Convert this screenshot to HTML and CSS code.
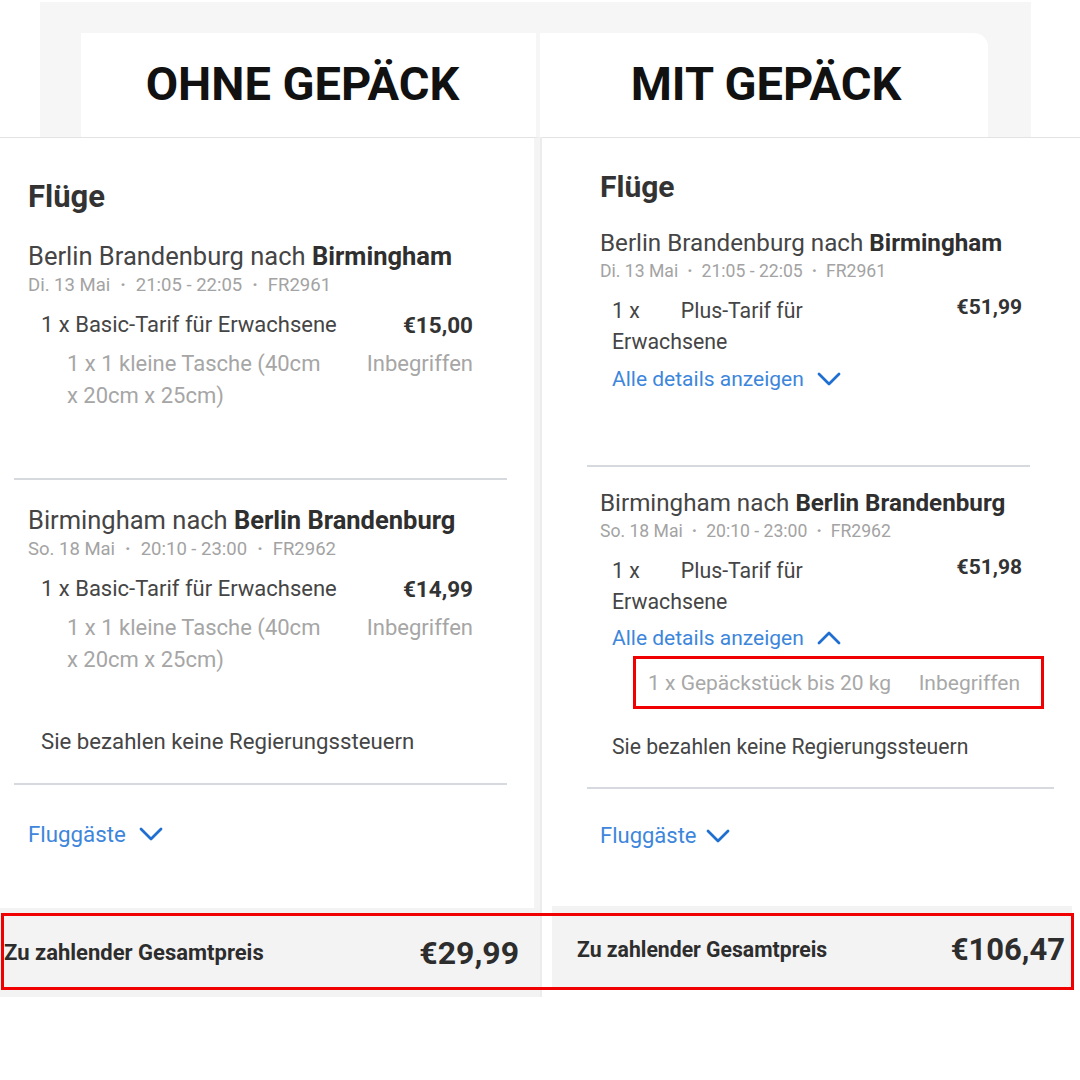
FILE: index.html
```html
<!DOCTYPE html>
<html lang="de">
<head>
<meta charset="utf-8">
<title>Ohne Gepäck / Mit Gepäck</title>
<link rel="stylesheet" href="styles.css">
</head>
<body>
<div class="page">
  <div class="header">
    <div class="hcard hcard-left">OHNE GEPÄCK</div>
    <div class="hcard hcard-right">MIT GEPÄCK</div>
  </div>

  <div class="cols">
    <!-- LEFT: OHNE GEPÄCK -->
    <section class="col col-left">
      <div class="panel">
        <h2 class="title">Flüge</h2>

        <div class="route">Berlin Brandenburg nach <b>Birmingham</b></div>
        <div class="meta">Di. 13 Mai<span class="dot">·</span>21:05 - 22:05<span class="dot">·</span>FR2961</div>
        <div class="fare">
          <span class="fare-label">1 x Basic-Tarif für Erwachsene</span>
          <span class="fare-price">€15,00</span>
        </div>
        <div class="incl">
          <span class="incl-label">1 x 1 kleine Tasche (40cm x 20cm x 25cm)</span>
          <span class="incl-value">Inbegriffen</span>
        </div>

        <div class="divider divider-1"></div>

        <div class="route route-2">Birmingham nach <b>Berlin Brandenburg</b></div>
        <div class="meta">So. 18 Mai<span class="dot">·</span>20:10 - 23:00<span class="dot">·</span>FR2962</div>
        <div class="fare">
          <span class="fare-label">1 x Basic-Tarif für Erwachsene</span>
          <span class="fare-price">€14,99</span>
        </div>
        <div class="incl">
          <span class="incl-label">1 x 1 kleine Tasche (40cm x 20cm x 25cm)</span>
          <span class="incl-value">Inbegriffen</span>
        </div>

        <div class="taxes">Sie bezahlen keine Regierungssteuern</div>

        <div class="divider divider-2"></div>

        <div class="link link-pax">Fluggäste
          <svg class="chev" viewBox="0 0 24 14" width="24" height="14"><polyline points="2,2 12,12 22,2" /></svg>
        </div>
      </div>
      <div class="total">
        <span class="total-label">Zu zahlender Gesamtpreis</span>
        <span class="total-price">€29,99</span>
      </div>
    </section>

    <!-- RIGHT: MIT GEPÄCK -->
    <section class="col col-right">
      <div class="panel">
        <h2 class="title">Flüge</h2>

        <div class="route">Berlin Brandenburg nach <b>Birmingham</b></div>
        <div class="meta">Di. 13 Mai<span class="dot">·</span>21:05 - 22:05<span class="dot">·</span>FR2961</div>
        <div class="fare">
          <div class="fare-label">
            <div class="fline"><span class="qty">1 x</span><span>Plus-Tarif für</span></div>
            <div>Erwachsene</div>
          </div>
          <span class="fare-price">€51,99</span>
        </div>
        <div class="link link-details">Alle details anzeigen
          <svg class="chev" viewBox="0 0 24 14" width="24" height="14"><polyline points="2,2 12,12 22,2" /></svg>
        </div>

        <div class="divider divider-1"></div>

        <div class="route route-2">Birmingham nach <b>Berlin Brandenburg</b></div>
        <div class="meta">So. 18 Mai<span class="dot">·</span>20:10 - 23:00<span class="dot">·</span>FR2962</div>
        <div class="fare">
          <div class="fare-label">
            <div class="fline"><span class="qty">1 x</span><span>Plus-Tarif für</span></div>
            <div>Erwachsene</div>
          </div>
          <span class="fare-price">€51,98</span>
        </div>
        <div class="link link-details link-open">Alle details anzeigen
          <svg class="chev" viewBox="0 0 24 14" width="24" height="14"><polyline points="2,12 12,2 22,12" /></svg>
        </div>
        <div class="bag">
          <span class="bag-label">1 x Gepäckstück bis 20 kg</span>
          <span class="bag-value">Inbegriffen</span>
        </div>

        <div class="taxes">Sie bezahlen keine Regierungssteuern</div>

        <div class="divider divider-2"></div>

        <div class="link link-pax">Fluggäste
          <svg class="chev" viewBox="0 0 24 14" width="24" height="14"><polyline points="2,2 12,12 22,2" /></svg>
        </div>
      </div>
      <div class="total">
        <span class="total-label">Zu zahlender Gesamtpreis</span>
        <span class="total-price">€106,47</span>
      </div>
    </section>
  </div>

  <div class="highlight"></div>
</div>
</body>
</html>
```

FILE: styles.css
```css
* { box-sizing: border-box; }

html, body {
  margin: 0;
  padding: 0;
  background: #ffffff;
}

body {
  font-family: Roboto, "Liberation Sans", Arial, sans-serif;
  color: #3f3f3f;
}

.page {
  position: relative;
  width: 1080px;
  height: 1080px;
  overflow: hidden;
  background: #ffffff;
}

/* ---------- header ---------- */
.header {
  display: flex;
  gap: 4px;
  margin: 2px 0 0 40px;
  width: 991px;
  height: 135px;
  padding: 31px 0 0 41px;
  background: #f6f6f6;
}

.hcard {
  display: flex;
  align-items: center;
  justify-content: center;
  height: 104px;
  background: #ffffff;
  font-size: 47px;
  font-weight: 700;
  color: #111111;
  padding-bottom: 4px;
}

.hcard-left { width: 455px; padding-right: 12px; }
.hcard-right { width: 448px; border-top-right-radius: 14px; padding-left: 4px; }

/* ---------- columns ---------- */
.cols {
  display: flex;
}

.col {
  width: 540px;
}

.panel {
  background: #ffffff;
  border-top: 1px solid #e3e3e3;
}

.title {
  margin: 0;
  font-weight: 700;
  color: #333333;
}

.route { color: #454545; white-space: nowrap; }
.route b { font-weight: 700; color: #2f2f2f; }

.meta {
  color: #a3a3a3;
  white-space: nowrap;
}
.dot {
  display: inline-block;
  margin: 0 10px;
  font-weight: 700;
}

.fare {
  display: flex;
  justify-content: space-between;
  align-items: flex-start;
  color: #454545;
}
.fare-price {
  font-weight: 700;
  color: #333333;
}

.incl {
  display: flex;
  justify-content: space-between;
  align-items: flex-start;
  color: #a6a6a6;
}

.divider {
  height: 2px;
  background: #d6d9dd;
}

.taxes { color: #454545; white-space: nowrap; }

.link {
  display: flex;
  align-items: center;
  color: #3d86db;
}
.chev {
  flex: none;
  fill: none;
  stroke: #1f6fd0;
  stroke-width: 2.8;
  stroke-linecap: round;
  stroke-linejoin: round;
}

.total {
  display: flex;
  align-items: center;
  justify-content: space-between;
  background: #f3f3f3;
  color: #2d2d2d;
}
.total-label {
  font-weight: 700;
}
.total-price {
  font-weight: 700;
}

/* ---------- left column ---------- */
.col-left .panel {
  height: 771px;
  padding: 42px 61px 0 28px;
  border-right: 6px solid #f4f4f4;
}
.col-left .title { font-size: 31px; line-height: 34px; }
.col-left .route { font-size: 25.5px; line-height: 28px; margin-top: 28px; }
.col-left .route-2 { margin-top: 26px; }
.col-left .meta { font-size: 18.5px; line-height: 20px; margin-top: 5px; }
.col-left .fare { font-size: 22px; line-height: 30px; margin-top: 15px; padding-left: 13px; }
.col-left .fare-price { font-size: 22.5px; }
.col-left .incl { font-size: 22px; line-height: 32px; margin-top: 8px; padding-left: 39px; }
.col-left .incl-label { width: 268px; }
.col-left .divider { margin-left: -14px; width: 493px; }
.col-left .divider-1 { margin-top: 66px; }
.col-left .taxes { font-size: 22.2px; line-height: 30px; margin-top: 50px; padding-left: 13px; }
.col-left .divider-2 { margin-top: 27px; }
.col-left .link-pax { font-size: 22.3px; line-height: 30px; margin-top: 34px; gap: 13px; }
.col-left .total {
  height: 89px;
  padding: 0 21px 0 4px;
}
.col-left .total-label { font-size: 22px; }
.col-left .total-price { font-size: 32px; }

/* ---------- right column ---------- */
.col-right { border-left: 2px solid #ececec; width: 540px; }
.col-right .panel {
  height: 769px;
  padding: 33px 58px 0 58px;
}
.col-right .title { font-size: 30px; line-height: 32px; }
.col-right .route { font-size: 24.2px; line-height: 26px; margin-top: 27px; }
.col-right .route-2 { margin-top: 23px; }
.col-right .meta { font-size: 17.6px; line-height: 20px; margin-top: 5px; }
.col-right .meta .dot { margin: 0 9px; }
.col-right .fare { font-size: 21.3px; line-height: 31px; margin-top: 14px; padding-left: 12px; }
.col-right .fline { display: flex; gap: 41px; }
.col-right .fare-price { margin-top: -3px; font-size: 21px; }
.col-right .link-details { font-size: 21px; line-height: 28px; margin-top: 8px; padding-left: 12px; gap: 13px; }
.col-right .link-open { margin-top: 7px; }
.col-right .divider { margin-left: -13px; }
.col-right .divider-1 { margin-top: 72px; width: 443px; }
.col-right .bag {
  display: flex;
  justify-content: space-between;
  align-items: center;
  margin: 4px 0 0 33px;
  width: 411px;
  height: 53px;
  padding: 0 21px 0 12px;
  border: 3px solid #f00000;
  font-size: 21px;
  color: #a8a8a8;
  white-space: nowrap;
}
.col-right .taxes { font-size: 21.2px; line-height: 28px; margin-top: 24px; padding-left: 12px; }
.col-right .divider-2 { margin-top: 26px; width: 467px; }
.col-right .link-pax { font-size: 22px; line-height: 28px; margin-top: 33px; gap: 9px; }
.col-right .total {
  margin-left: 10px;
  width: 520px;
  height: 83px;
  padding: 4px 7px 0 25px;
}
.col-right .total-label { font-size: 21.2px; }
.col-right .total-price { font-size: 31px; }

/* ---------- annotation overlay ---------- */
.highlight {
  position: absolute;
  left: 1px;
  top: 913px;
  width: 1073px;
  height: 77px;
  border: 3px solid #f00000;
  pointer-events: none;
}
```
